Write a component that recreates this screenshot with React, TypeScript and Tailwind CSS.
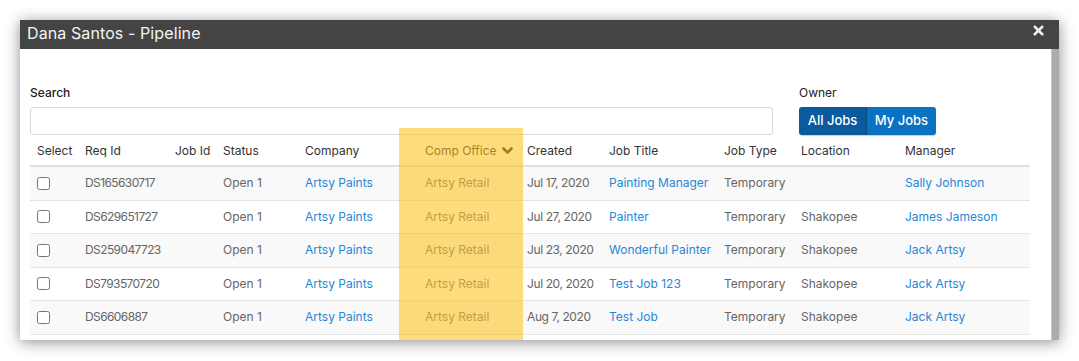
import { FC } from 'react';
import { X } from 'lucide-react';

type Row = {
  reqId: string;
  status: string;
  company: string;
  office: string;
  created: string;
  title: string;
  jobType: string;
  location: string;
  manager: string;
};

const rows: Row[] = [
  { reqId: 'DS165630717', status: 'Open 1', company: 'Artsy Paints', office: 'Artsy Retail', created: 'Jul 17, 2020', title: 'Painting Manager', jobType: 'Temporary', location: '', manager: 'Sally Johnson' },
  { reqId: 'DS629651727', status: 'Open 1', company: 'Artsy Paints', office: 'Artsy Retail', created: 'Jul 27, 2020', title: 'Painter', jobType: 'Temporary', location: 'Shakopee', manager: 'James Jameson' },
  { reqId: 'DS259047723', status: 'Open 1', company: 'Artsy Paints', office: 'Artsy Retail', created: 'Jul 23, 2020', title: 'Wonderful Painter', jobType: 'Temporary', location: 'Shakopee', manager: 'Jack Artsy' },
  { reqId: 'DS793570720', status: 'Open 1', company: 'Artsy Paints', office: 'Artsy Retail', created: 'Jul 20, 2020', title: 'Test Job 123', jobType: 'Temporary', location: 'Shakopee', manager: 'Jack Artsy' },
  { reqId: 'DS6606887', status: 'Open 1', company: 'Artsy Paints', office: 'Artsy Retail', created: 'Aug 7, 2020', title: 'Test Job', jobType: 'Temporary', location: 'Shakopee', manager: 'Jack Artsy' },
];

const cols = 'grid grid-cols-[48px_90px_48px_82px_120px_102px_82px_115px_77px_104px_132px]';

const SortChevron: FC = () => (
  <svg width="11" height="8" viewBox="0 0 11 8" fill="none">
    <path d="M1.5 1.5 L5.5 5.5 L9.5 1.5" stroke="currentColor" strokeWidth="2.6" strokeLinecap="round" strokeLinejoin="round" />
  </svg>
);

const App: FC = () => {
  return (
    <div className="w-[1079px] h-[361px] bg-white pt-5 pl-5 font-['Inter',sans-serif]">
      <div className="w-[1039px] h-[320px] flex flex-col bg-white shadow-[0_2px_14px_rgba(0,0,0,0.45)] overflow-hidden">
        {/* title bar */}
        <div className="h-[29px] shrink-0 bg-[#444] flex justify-between pl-[7px] pr-[13px]">
          <span className="text-[16px] leading-[26px] text-[#f4f4f4] tracking-[0.1px]">Dana Santos - Pipeline</span>
          <X size={15} strokeWidth={4} className="text-[#f0f0f0] mt-[3px]" />
        </div>

        <div className="flex flex-1 min-h-0">
          <div className="relative flex-1 pl-[10px] pt-[36px]">
            {/* filters */}
            <div className="flex gap-[26px]">
              <div className="w-[743px] flex flex-col gap-[6px]">
                <label className="text-[12px] font-medium text-[#222] leading-4">Search</label>
                <input className="h-[28px] border border-[#d9d9d9] rounded-[3px] outline-none px-2 text-[12px]" />
              </div>
              <div className="flex flex-col gap-[6px]">
                <label className="text-[12px] text-[#222] leading-4">Owner</label>
                <div className="flex h-[28px] rounded-[3px] overflow-hidden shadow-[0_1px_1px_rgba(0,0,0,0.2)]">
                  <button className="w-[68px] bg-[#0b5a9e] text-white text-[13px] font-medium border-r border-[#084a85]">All Jobs</button>
                  <button className="w-[69px] bg-[#0a72c2] text-white text-[13px] font-medium">My Jobs</button>
                </div>
              </div>
            </div>

            {/* table */}
            <div className="w-[1000px] whitespace-nowrap">
              <div className={`${cols} h-[32px] items-center pt-[2px] border-b-2 border-[#dedede] text-[12px] text-[#333]`}>
                <div className="px-[7px]">Select</div>
                <div className="px-[7px]">Req Id</div>
                <div className="px-[7px]">Job Id</div>
                <div className="px-[7px]">Status</div>
                <div className="px-[7px]">Company</div>
                <div className="px-[7px] flex items-center gap-[5px] text-[#1a1a1a]">
                  Comp Office <SortChevron />
                </div>
                <div className="px-[7px]">Created</div>
                <div className="px-[7px]">Job Title</div>
                <div className="px-[7px]">Job Type</div>
                <div className="px-[7px]">Location</div>
                <div className="px-[7px]">Manager</div>
              </div>
              {rows.map((r, i) => (
                <div
                  key={r.reqId}
                  className={`${cols} h-[33.5px] items-center border-b border-[#e3e3e3] text-[12px] text-[#666] ${i % 2 === 0 ? 'bg-[#f9f9f9]' : 'bg-white'}`}
                >
                  <div className="px-[7px] flex items-center">
                    <input type="checkbox" className="m-0 w-[13px] h-[13px]" />
                  </div>
                  <div className="px-[7px] tracking-[-0.6px]">{r.reqId}</div>
                  <div className="px-[7px]"></div>
                  <div className="px-[7px]">{r.status}</div>
                  <div className="px-[7px] text-[#2687d6]">{r.company}</div>
                  <div className="px-[7px]">{r.office}</div>
                  <div className="px-[7px] tracking-[-0.4px]">{r.created}</div>
                  <div className="px-[7px] text-[#2687d6]">{r.title}</div>
                  <div className="px-[7px]">{r.jobType}</div>
                  <div className="px-[7px]">{r.location}</div>
                  <div className="px-[7px] text-[#2687d6]">{r.manager}</div>
                </div>
              ))}
            </div>

            {/* highlighted column annotation */}
            <div className="absolute left-[379px] top-[79px] bottom-0 w-[124px] bg-[rgba(252,197,40,0.6)] pointer-events-none" />
          </div>
          {/* scrollbar */}
          <div className="w-[8px] shrink-0 bg-[#ababab] border-l border-[#c8c8c8]" />
        </div>
      </div>
    </div>
  );
};

export default App;
